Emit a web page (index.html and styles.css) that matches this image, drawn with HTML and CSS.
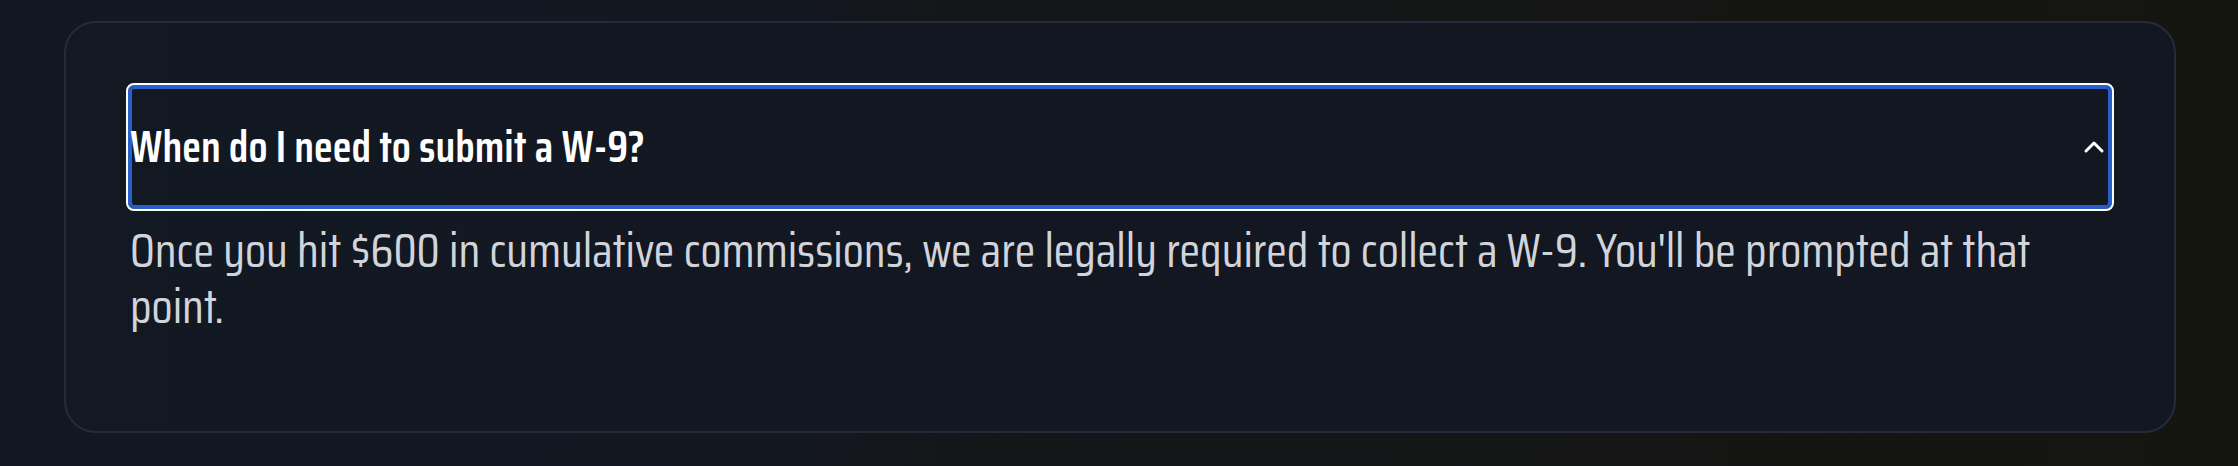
FILE: index.html
```html
<!DOCTYPE html>
<html lang="en">
<head>
<meta charset="utf-8">
<title>FAQ</title>
<link rel="stylesheet" href="styles.css">
</head>
<body>
<main class="page">
  <section class="card">
    <h3 class="heading">
      <button class="trigger" type="button" aria-expanded="true" aria-controls="answer" id="question">
        <span>When do I need to submit a W-9?</span>
        <svg class="chevron" viewBox="0 0 32 32" aria-hidden="true"><path d="M8 20l8-8 8 8"/></svg>
      </button>
    </h3>
    <p class="answer" id="answer" role="region" aria-labelledby="question">Once you hit $600 in cumulative commissions, we are legally required to collect a W-9. You'll be prompted at that point.</p>
  </section>
</main>
</body>
</html>
```

FILE: styles.css
```css
* {
  box-sizing: border-box;
}

body {
  margin: 0;
  min-height: 100vh;
  background: linear-gradient(90deg, #121823 0%, #131720 35%, #151619 43%, #141514 75%, #151510 100%);
  font-family: "Saira Condensed", "Roboto Condensed", "Liberation Sans", sans-serif;
}

.page {
  padding: 21px 62px 32px 64px;
}

.card {
  padding: 64px 64px 96px;
  border: 2px solid #262b3a;
  border-radius: 32px;
  background: linear-gradient(90deg, #121923, #131721 30%, #131721);
}

.heading {
  margin: 0;
}

.trigger {
  display: flex;
  align-items: center;
  justify-content: space-between;
  width: 100%;
  padding: 32px 0;
  border: 0;
  border-radius: 4px;
  outline: 2px solid #fff;
  outline-offset: 2px;
  background: none;
  box-shadow: inset 0 0 0 2px #285fc8, 0 0 0 2px #285fc8;
  color: #fff;
  font: inherit;
  font-size: 44px;
  font-weight: 600;
  line-height: 56px;
  text-align: left;
  cursor: pointer;
}

.chevron {
  flex: none;
  width: 32px;
  height: 32px;
  fill: none;
  stroke: currentColor;
  stroke-width: 3;
  stroke-linecap: round;
  stroke-linejoin: round;
}

.answer {
  margin: 0;
  padding-top: 16px;
  color: #d1d5db;
  font-size: 48px;
  font-weight: 400;
  line-height: 56px;
}
```
